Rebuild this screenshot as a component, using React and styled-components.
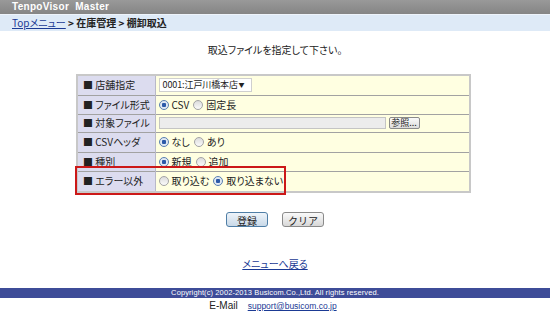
import React from 'react';
import styled, { createGlobalStyle } from 'styled-components';

const GlobalStyle = createGlobalStyle`
  html, body {
    margin: 0;
    padding: 0;
    background: #fff;
  }
  body {
    font-family: "Noto Sans CJK JP", "Liberation Sans", sans-serif;
    font-size: 10px;
    color: #222;
    font-feature-settings: "palt";
  }
`;

const Page = styled.div`
  width: 550px;
  height: 316px;
  overflow: hidden;
  display: flex;
  flex-direction: column;
`;

const TitleBar = styled.div`
  height: 14px;
  background: linear-gradient(#999, #858585);
  color: #fff;
  font-family: "Liberation Sans", sans-serif;
  font-weight: bold;
  font-size: 10px;
  letter-spacing: 0.3px;
  line-height: 14px;
  padding-left: 12px;
`;

const Crumbs = styled.div`
  height: 16px;
  background: #deeaf7;
  border-top: 1px solid #eef4fb;
  line-height: 15px;
  padding-left: 12px;
  font-size: 10px;
  font-weight: bold;
  color: #222;
`;

const CrumbLink = styled.a`
  color: #1b3a94;
  text-decoration: underline;
  font-weight: normal;
`;

const Lead = styled.p`
  margin: 13px 0 0;
  text-align: center;
  font-size: 10px;
  line-height: 12px;
`;

const TableWrap = styled.div`
  position: relative;
  width: 395px;
  margin: 18px 0 0 76px;
`;

const Form = styled.table`
  width: 100%;
  border-collapse: collapse;
  border: 2px solid #c8c8c8;
`;

const Row = styled.tr`
  border-bottom: 1px solid #a2a2a2;
  &:last-child { border-bottom: none; }
`;

const Label = styled.td`
  box-sizing: border-box;
  width: 78px;
  height: ${(p) => p.$h || 19}px;
  background: #dcdcef;
  padding: 0 0 0 5px;
  border-right: 1px solid #b8b8c8;
  font-size: 10px;
  line-height: 12px;
  white-space: nowrap;
`;

const Value = styled.td`
  background: #ffffe1;
  padding: 0 0 0 3px;
  line-height: 12px;
`;

const Inline = styled.div`
  display: flex;
  align-items: center;
  gap: ${(p) => p.$gap || 4}px;
  font-size: 10px;
`;

const Choice = styled.label`
  display: flex;
  align-items: center;
  gap: 3px;
`;

const Dot = styled.span`
  width: 8px;
  height: 8px;
  border-radius: 50%;
  border: 1px solid ${(p) => (p.$on ? '#5a7fb0' : '#a4a4a4')};
  background: ${(p) =>
    p.$on
      ? 'radial-gradient(circle, #2c5aa8 0 2px, #dfe8f3 2.5px)'
      : 'linear-gradient(#dcdcdc, #fafafa)'};
`;

const Select = styled.div`
  box-sizing: border-box;
  display: flex;
  flex: none;
  width: 93px;
  height: 14px;
  background: #fff;
  border: 1px solid #cfcfcf;
  align-items: center;
  padding: 0 0 0 3px;
  font-size: 9px;
  letter-spacing: -0.1px;
  white-space: nowrap;
`;

const Caret = styled.span`
  margin-left: auto;
  width: 12px;
  font-size: 6px;
`;

const FileBox = styled.div`
  width: 225px;
  height: 10px;
  background: #ececec;
  border: 1px solid #c4c4c4;
`;

const SmallButton = styled.button`
  height: 12px;
  width: 31px;
  padding: 0;
  font-family: inherit;
  font-size: 9px;
  line-height: 10px;
  border: 1px solid #8a8a8a;
  border-radius: 2px;
  background: linear-gradient(#fafafa, #dcdcdc);
  color: #222;
`;

const Highlight = styled.div`
  position: absolute;
  left: -1px;
  bottom: -2px;
  width: 207px;
  height: 25px;
  border: 2px solid #cc1818;
  pointer-events: none;
`;

const Actions = styled.div`
  display: flex;
  justify-content: center;
  gap: 14px;
  margin-top: 19px;
`;

const Button = styled.button`
  width: 42px;
  height: 15px;
  padding: 0;
  font-family: inherit;
  font-size: 10px;
  color: #222;
  border-radius: 3px;
  border: 1px solid ${(p) => (p.$primary ? '#4f7ea6' : '#8a8a8a')};
  background: ${(p) =>
    p.$primary
      ? 'linear-gradient(#eef4fa, #c9d9e8)'
      : 'linear-gradient(#fafafa, #d8d8d8)'};
`;

const Back = styled.a`
  display: block;
  margin: 31px auto 0;
  text-align: center;
  font-size: 10px;
  line-height: 12px;
  color: #1b3a94;
  text-decoration: underline;
`;

const Footer = styled.div`
  margin-top: 18px;
  height: 10px;
  background: #3e4c98;
  color: #fff;
  text-align: center;
  font-family: "Liberation Sans", sans-serif;
  font-size: 7.5px;
  letter-spacing: 0.1px;
  line-height: 10px;
`;

const Contact = styled.div`
  display: flex;
  justify-content: center;
  align-items: baseline;
  gap: 10px;
  margin-top: 2px;
  font-family: "Liberation Sans", sans-serif;
  font-size: 10px;
  line-height: 12px;
  padding-right: 4px;
`;

const Mail = styled.a`
  color: #1b3a94;
  font-size: 8.5px;
  text-decoration: underline;
`;

function Radio({ on, children }) {
  return (
    <Choice>
      <Dot $on={on} />
      {children}
    </Choice>
  );
}

export default function App() {
  return (
    <>
      <GlobalStyle />
      <Page>
        <TitleBar>TenpoVisor&nbsp; Master</TitleBar>
        <Crumbs>
          <CrumbLink href="#">Topメニュー</CrumbLink> &gt; 在庫管理 &gt; 棚卸取込
        </Crumbs>
        <Lead>取込ファイルを指定して下さい。</Lead>

        <TableWrap>
          <Form>
            <tbody>
              <Row>
                <Label $h={20}>■ 店舗指定</Label>
                <Value>
                  <Select>
                    <span>0001:江戸川橋本店</span>
                    <Caret>▼</Caret>
                  </Select>
                </Value>
              </Row>
              <Row>
                <Label>■ ファイル形式</Label>
                <Value>
                  <Inline>
                    <Radio on>CSV</Radio>
                    <Radio>固定長</Radio>
                  </Inline>
                </Value>
              </Row>
              <Row>
                <Label $h={18}>■ 対象ファイル</Label>
                <Value>
                  <Inline $gap={3}>
                    <FileBox />
                    <SmallButton>参照...</SmallButton>
                  </Inline>
                </Value>
              </Row>
              <Row>
                <Label $h={20}>■ CSVヘッダ</Label>
                <Value>
                  <Inline>
                    <Radio on>なし</Radio>
                    <Radio>あり</Radio>
                  </Inline>
                </Value>
              </Row>
              <Row>
                <Label>■ 種別</Label>
                <Value>
                  <Inline>
                    <Radio on>新規</Radio>
                    <Radio>追加</Radio>
                  </Inline>
                </Value>
              </Row>
              <Row>
                <Label $h={21}>■ エラー以外</Label>
                <Value>
                  <Inline>
                    <Radio>取り込む</Radio>
                    <Radio on>取り込まない</Radio>
                  </Inline>
                </Value>
              </Row>
            </tbody>
          </Form>
          <Highlight />
        </TableWrap>

        <Actions>
          <Button $primary>登録</Button>
          <Button>クリア</Button>
        </Actions>

        <Back href="#">メニューへ戻る</Back>

        <Footer>Copyright(c) 2002-2013 Busicom.Co.,Ltd. All rights reserved.</Footer>
        <Contact>
          <span>E-Mail</span>
          <Mail href="#">support@busicom.co.jp</Mail>
        </Contact>
      </Page>
    </>
  );
}
